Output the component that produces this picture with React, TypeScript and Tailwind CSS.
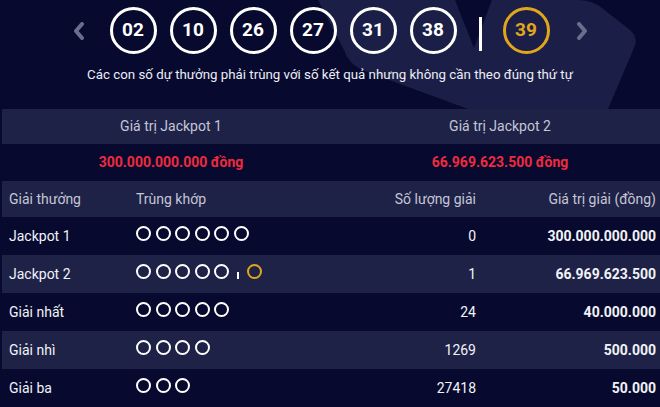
import React from "react";

type Row = { name: string; white: number; bonus?: boolean; count: string; value: string };

const numbers = ["02", "10", "26", "27", "31", "38"];

const rows: Row[] = [
  { name: "Jackpot 1", white: 6, count: "0", value: "300.000.000.000" },
  { name: "Jackpot 2", white: 5, bonus: true, count: "1", value: "66.969.623.500" },
  { name: "Giải nhất", white: 5, count: "24", value: "40.000.000" },
  { name: "Giải nhì", white: 4, count: "1269", value: "500.000" },
  { name: "Giải ba", white: 3, count: "27418", value: "50.000" },
];

function Chevron({ dir }: { dir: "left" | "right" }) {
  return (
    <svg width="14" height="18" viewBox="0 0 14 18" className="shrink-0">
      <path
        d={dir === "left" ? "M10 2 L4 9 L10 16" : "M4 2 L10 9 L4 16"}
        fill="none"
        stroke="#6a6d8c"
        strokeWidth="4"
        strokeLinecap="round"
        strokeLinejoin="round"
      />
    </svg>
  );
}

function Ball({ n, gold }: { n: string; gold?: boolean }) {
  return (
    <div
      className={
        gold
          ? "w-[47px] h-[47px] rounded-full border-[3px] border-[#e0a61c] text-[#e0a61c] flex items-center justify-center text-[19px] font-bold"
          : "w-[47px] h-[47px] rounded-full border-[3px] border-white text-white flex items-center justify-center text-[19px] font-bold"
      }
    >
      {n}
    </div>
  );
}

function Dot({ gold }: { gold?: boolean }) {
  return (
    <span
      className={
        gold
          ? "block w-[15px] h-[15px] rounded-full border-[2.5px] border-[#e0a61c]"
          : "block w-[15px] h-[15px] rounded-full border-[2.5px] border-white"
      }
    />
  );
}

export default function App() {
  return (
    <div className="w-[660px] h-[407px] bg-[#070a2e] overflow-hidden font-['Roboto',sans-serif]">
      {/* top: drawn numbers */}
      <div className="relative h-[109px]">
        <svg className="absolute inset-0" width="660" height="109" viewBox="0 0 660 109">
          <path
            d="M318 0 L455 0 L474 48 L492 0 L578 0 Q592 0 602 8 L630 30 Q639 38 634 48 L608 109 L468 109 L362 70 Q348 63 344 50 Z"
            fill="#1b1e46"
          />
        </svg>
        <div className="relative flex flex-col items-center pt-[7px]">
          <div className="flex items-center">
            <Chevron dir="left" />
            <div className="flex items-center gap-[13px] ml-[24px]">
              {numbers.map((n) => (
                <Ball key={n} n={n} />
              ))}
            </div>
            <div className="w-[3px] h-[34px] bg-white ml-[22px] mr-[21px] mt-[7px]" />
            <Ball n="39" gold />
            <div className="ml-[25px]">
              <Chevron dir="right" />
            </div>
          </div>
          <p className="mt-[13px] text-[13.3px] leading-[16px] text-[#eceef5]">
            Các con số dự thưởng phải trùng với số kết quả nhưng không cần theo đúng thứ tự
          </p>
        </div>
      </div>

      {/* jackpot values */}
      <div className="ml-[2px] text-[14px]">
        <div className="grid grid-cols-[338px_1fr] h-[35px] bg-[#1f2247] text-[#c4c6d6] items-center text-center">
          <div>Giá trị Jackpot 1</div>
          <div>Giá trị Jackpot 2</div>
        </div>
        <div className="grid grid-cols-[338px_1fr] h-[37px] text-[#ef2a3e] font-bold items-center text-center">
          <div>300.000.000.000 đồng</div>
          <div>66.969.623.500 đồng</div>
        </div>

        {/* prize table */}
        <div className="grid grid-cols-[127px_200px_152px_1fr] h-[36px] bg-[#1f2247] text-[#c4c6d6] items-center">
          <div className="pl-[7px]">Giải thưởng</div>
          <div className="pl-[7px]">Trùng khớp</div>
          <div className="text-right pr-[5px]">Số lượng giải</div>
          <div className="text-right pr-[4px]">Giá trị giải (đồng)</div>
        </div>
        {rows.map((r, i) => (
          <div
            key={r.name}
            className={
              i % 2 === 1
                ? "grid grid-cols-[127px_200px_152px_1fr] h-[38px] bg-[#1f2247] text-[#f1f2f7] items-center"
                : "grid grid-cols-[127px_200px_152px_1fr] h-[38px] text-[#f1f2f7] items-center"
            }
          >
            <div className="pl-[7px]">{r.name}</div>
            <div className="pl-[7px] flex items-center gap-[4.5px] -mt-[5px]">
              {Array.from({ length: r.white }).map((_, k) => (
                <Dot key={k} />
              ))}
              {r.bonus && (
                <>
                  <span className="block w-[2px] h-[7px] bg-white self-end mx-[3.5px]" />
                  <Dot gold />
                </>
              )}
            </div>
            <div className="text-right pr-[5px]">{r.count}</div>
            <div className="text-right pr-[4px] font-bold">{r.value}</div>
          </div>
        ))}
      </div>
    </div>
  );
}
